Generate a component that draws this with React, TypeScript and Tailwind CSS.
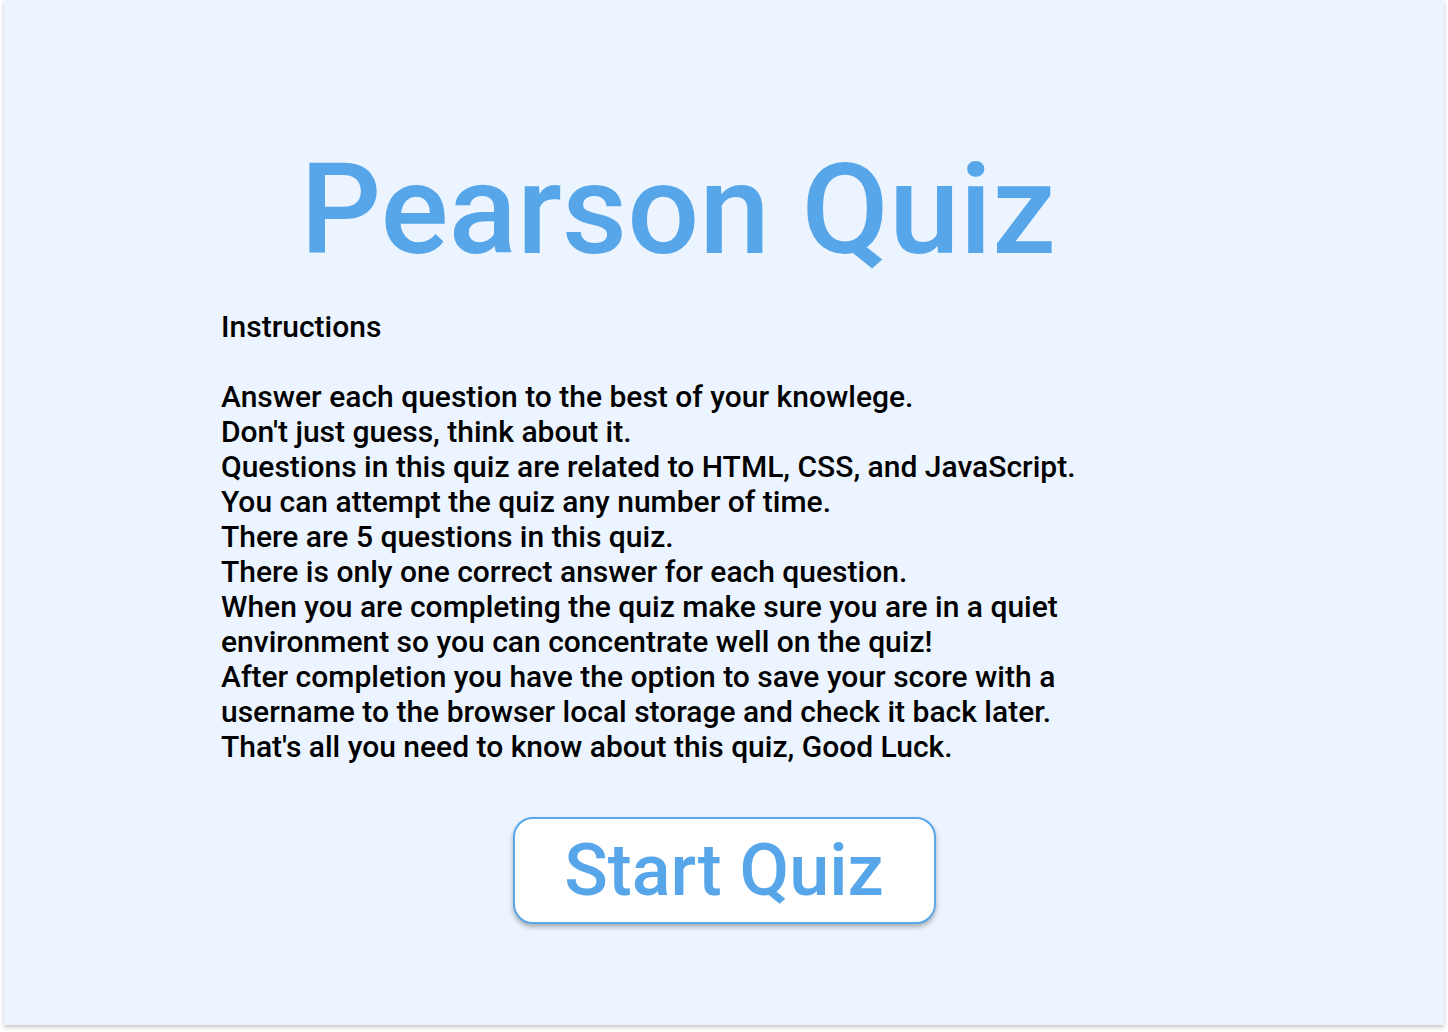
import React from "react";

const lines = [
  "Instructions",
  "",
  "Answer each question to the best of your knowlege.",
  "Don't just guess, think about it.",
  "Questions in this quiz are related to HTML, CSS, and JavaScript.",
  "You can attempt the quiz any number of time.",
  "There are 5 questions in this quiz.",
  "There is only one correct answer for each question.",
  "When you are completing the quiz make sure you are in a quiet environment so you can concentrate well on the quiz!",
  "After completion you have the option to save your score with a username to the browser local storage and check it back later.",
  "That's all you need to know about this quiz, Good Luck.",
];

export default function App() {
  return (
    <div className="min-h-[1032px] bg-white" style={{ fontFamily: "Roboto, sans-serif" }}>
      <div className="mx-auto w-[1440px] h-[1025px] bg-[#ecf5ff] shadow-[0_2px_4px_rgba(0,0,0,0.25)] flex flex-col">
        <div className="ml-[217px] w-[914px] pt-[146px]">
          <h1 className="text-[127px] leading-[128px] font-medium text-[#58a6ea] text-center">Pearson Quiz</h1>
          <div className="mt-[35px] text-[30px] leading-[35px] font-medium text-black">
            {lines.map((l, i) => (
              <div key={i} className="min-h-[35px]">{l}</div>
            ))}
          </div>
        </div>
        <div className="flex justify-center mt-[53px]">
          <button className="w-[423px] h-[107px] rounded-[20px] border-2 border-[#5aa7ea] bg-white text-[#58a6ea] text-[72px] font-medium leading-none shadow-[0_3px_5px_rgba(0,0,0,0.3)]">
            Start Quiz
          </button>
        </div>
      </div>
    </div>
  );
}
